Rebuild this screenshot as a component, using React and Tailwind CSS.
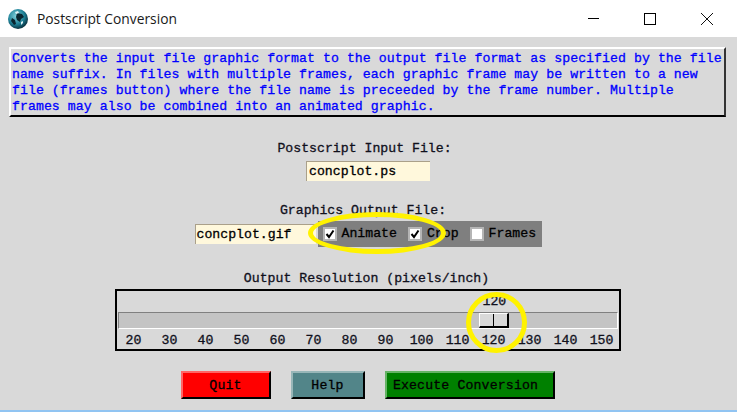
import React from 'react';

const ticks = [20, 30, 40, 50, 60, 70, 80, 90, 100, 110, 120, 130, 140, 150];

const GlobeIcon = () => (
  <svg width="20" height="20" viewBox="0 0 20 20" className="shrink-0">
    <defs>
      <radialGradient id="globe" cx="40%" cy="35%" r="70%">
        <stop offset="0%" stopColor="#7fd0dc" />
        <stop offset="60%" stopColor="#1d7f95" />
        <stop offset="100%" stopColor="#06222e" />
      </radialGradient>
    </defs>
    <circle cx="10" cy="10" r="10" fill="url(#globe)" />
    <path d="M9 4l5 1 2 3-3 2-1 3-3-2-1-3zM4 9l3 2 1 4-2 1-3-4z" fill="#0a2630" />
    <path d="M7 3l3-1 1 2-3 1zM13 13l2-1 0 2-2 2z" fill="#dff2f5" />
  </svg>
);

const Check = ({ checked }) => (
  <span className="w-[14px] h-[14px] bg-white border-2 border-[#b5b5b5] flex items-center justify-center shrink-0">
    {checked && (
      <svg width="10" height="10" viewBox="0 0 10 10">
        <path d="M1.5 5L4 8L8.5 1.5" fill="none" stroke="#000" strokeWidth="2" />
      </svg>
    )}
  </span>
);

const Option = ({ label, checked }) => (
  <span className="flex items-center gap-[5px]">
    <Check checked={checked} />
    <span>{label}</span>
  </span>
);

const Button = ({ children, className }) => (
  <button className={`h-[28px] border-2 border-t-[#ffffff66] border-l-[#ffffff66] border-r-black border-b-black flex items-center justify-center text-black pt-[2px] tracking-[0.15px] ${className}`}>
    {children}
  </button>
);

export default function App() {
  return (
    <div className="relative w-[737px] h-[412px] overflow-hidden bg-[#d9d9d9] font-['Liberation_Mono',monospace] text-[13.2px] leading-[16px] text-[#10101c] [-webkit-text-stroke:0.3px]">
      {/* title bar */}
      <div className="h-[37px] bg-white flex items-center pl-[8px] font-['Open_Sans',sans-serif] text-[13.8px] text-[#1a1a1a] [-webkit-text-stroke:0px]">
        <GlobeIcon />
        <span className="ml-[9px]">Postscript Conversion</span>
        <div className="ml-auto flex items-center gap-[45px] pr-[24px]">
          <span className="w-[11px] h-px bg-black" />
          <span className="w-[12px] h-[12px] border border-black" />
          <svg width="12" height="12" viewBox="0 0 12 12">
            <path d="M0 0L12 12M12 0L0 12" stroke="#111" strokeWidth="1" />
          </svg>
        </div>
      </div>

      <div className="flex flex-col items-center pt-[10px]">
        {/* description */}
        <div className="mr-[2px] w-[717px] h-[70px] border-2 border-t-white border-l-white border-b-black border-r-[#333] pl-[1px] pt-[2px] text-[#0000ff] whitespace-pre tracking-[0.06px]">
          {`Converts the input file graphic format to the output file format as specified by the file
name suffix. In files with multiple frames, each graphic frame may be written to a new
file (frames button) where the file name is preceeded by the frame number. Multiple
frames may also be combined into an animated graphic.`}
        </div>

        {/* input file */}
        <div className="mt-[24px] mr-[8px] h-[16px]">Postscript Input File:</div>
        <div className="mt-[4px] ml-[-1px] w-[124px] h-[20px] bg-[#fff8dc] border-l border-t border-[#aaa08a] pl-[2px] flex items-center text-black">concplot.ps</div>

        {/* output file */}
        <div className="mt-[22px] mr-[11px] h-[16px]">Graphics Output File:</div>
        <div className="mt-[2px] flex items-center ml-[-1px]">
          <div className="w-[121px] h-[20px] bg-[#fff8dc] border-l border-t border-[#aaa08a] pl-[1px] flex items-center text-black">concplot.gif</div>
          <div className="ml-[2px] w-[224px] h-[26px] bg-[#7f7f7f] flex items-center pl-[5px] gap-[11px] text-black">
            <Option label="Animate" checked />
            <Option label="Crop" checked />
            <Option label="Frames" />
          </div>
        </div>

        {/* resolution scale */}
        <div className="mt-[24px] mr-[4px] h-[16px]">Output Resolution (pixels/inch)</div>
        <div className="mt-[2px] mr-[2px] w-[506px] h-[62px] border-[2px] border-black px-[1px] flex flex-col">
          <div className="h-[21px] relative">
            <span className="absolute left-[365px] top-[3px]">120</span>
          </div>
          <div className="relative h-[17px] bg-[#c4c4c4] border-t border-l border-[#808080] border-b-white border-b border-r-white border-r">
            <div className="absolute left-[360px] top-0 w-[30px] h-[15px] bg-[#d9d9d9] border-t border-l border-white border-r-2 border-b-2 border-r-black border-b-black flex justify-center">
              <span className="w-px h-full bg-black" />
            </div>
          </div>
          <div className="flex mt-[4px] ml-[-2px]">
            {ticks.map((t) => (
              <span key={t} className="w-[36px] shrink-0 text-center">{t}</span>
            ))}
          </div>
        </div>

        {/* actions */}
        <div className="mt-[20px] flex items-center gap-[20px] ml-[-2px]">
          <Button className="w-[90px] bg-[#ff0000]">Quit</Button>
          <Button className="w-[74px] bg-[#528589]">Help</Button>
          <Button className="w-[170px] bg-[#008000] pr-[8px]">Execute Conversion</Button>
        </div>
      </div>

      {/* yellow annotations */}
      <div className="absolute left-[308px] top-[212px] w-[138px] h-[42px] rounded-[50%] border-[5px] border-[#fff200]" />
      <div className="absolute left-[466px] top-[292px] w-[61px] h-[61px] rounded-[50%] border-[5px] border-[#fff200]" />

      {/* taskbar sliver */}
      <div className="absolute left-0 right-0 bottom-0 h-[2px] bg-[#91c4f2]" />
    </div>
  );
}
